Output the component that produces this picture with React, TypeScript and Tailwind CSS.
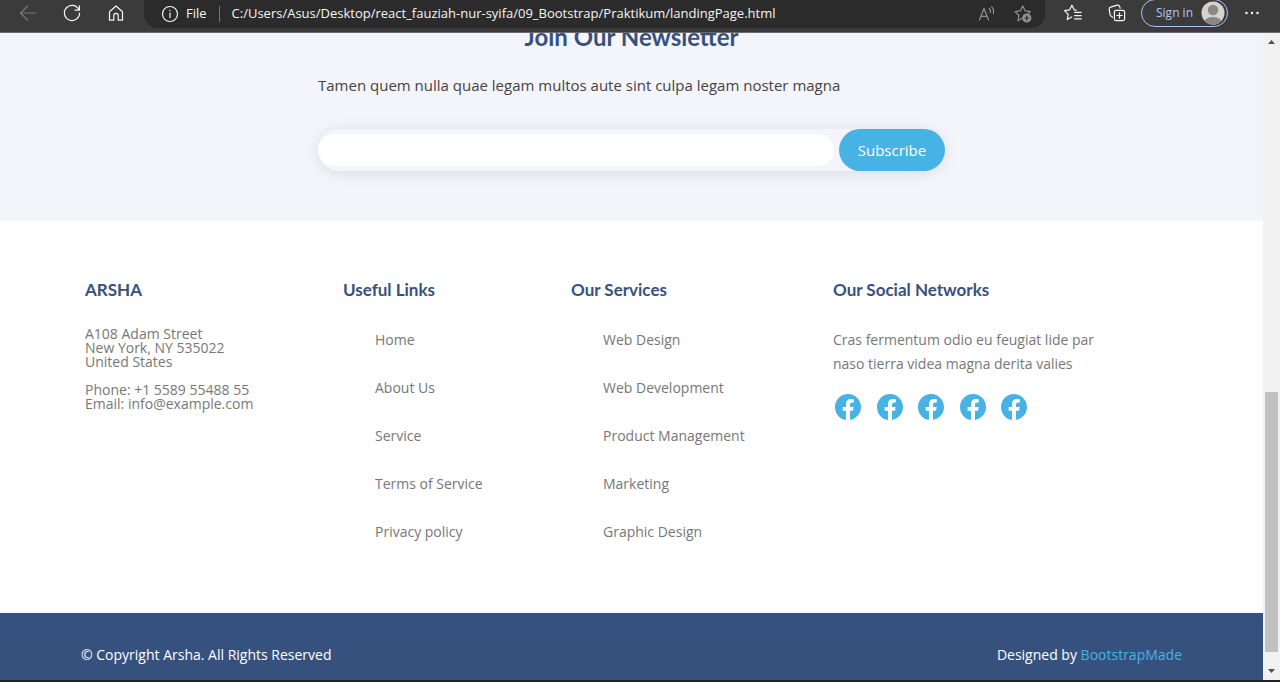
import type { ReactNode } from 'react';
import { BsFacebook } from 'react-icons/bs';

const usefulLinks = ['Home', 'About Us', 'Service', 'Terms of Service', 'Privacy policy'];
const services = ['Web Design', 'Web Development', 'Product Management', 'Marketing', 'Graphic Design'];
const socials = ['one', 'two', 'three', 'four', 'five'];

function ToolButton({ label, className = '', children }: { label: string; className?: string; children: ReactNode }) {
  return (
    <button type="button" aria-label={label} className={`flex size-5 shrink-0 items-center justify-center ${className}`}>
      <svg viewBox="0 0 20 20" className="size-5" fill="none" stroke="currentColor" strokeWidth="1.2" strokeLinecap="round" strokeLinejoin="round">
        {children}
      </svg>
    </button>
  );
}

function BrowserBar() {
  return (
    <header className="flex h-[33px] shrink-0 items-start border-b border-[#6b6b6b] bg-[#3b3b3b] px-[18px] font-['Open_Sans',sans-serif] text-[#f5f5f5]">
      <div className="flex h-[26px] shrink-0 items-center gap-6 pr-[18px]">
        <ToolButton label="Back" className="text-[#777777]">
          <path d="M18 10H2.5M9.5 3L2.5 10l7 7" />
        </ToolButton>
        <ToolButton label="Refresh">
          <path d="M16.8 6.5A7.6 7.6 0 1 0 17.6 10M17.4 2.8v4.4H13" />
        </ToolButton>
        <ToolButton label="Home">
          <path d="M3.5 8.8L10 3l6.5 5.8v8.4h-4.3v-4.6a2.2 2.2 0 0 0-4.4 0v4.6H3.5z" />
        </ToolButton>
      </div>
      <div className="flex h-7 min-w-0 flex-1 items-center rounded-b-[14px] bg-[#2b2b2b] pr-3 pb-px pl-4">
        <ToolButton label="Site information">
          <circle cx="10" cy="10" r="7.5" />
          <path d="M10 9v4.5M10 6.4v.4" />
        </ToolButton>
        <span className="ml-[6px] text-[13px]">File</span>
        <span className="mx-3 h-4 w-px shrink-0 bg-[#777777]" />
        <input
          aria-label="Address"
          readOnly
          value="C:/Users/Asus/Desktop/react_fauziah-nur-syifa/09_Bootstrap/Praktikum/landingPage.html"
          className="min-w-0 flex-1 bg-transparent text-[13px] outline-none"
        />
        <ToolButton label="Read aloud" className="text-[#929292]">
          <path d="M2.5 16L7 4.5 11.5 16M4 12.3h6M12.3 4.5a4 4 0 0 1 1 4M14.7 2.8a7 7 0 0 1 1.6 6.6" />
        </ToolButton>
        <ToolButton label="Add to favorites" className="ml-4 text-[#929292]">
          <path d="M9.5 14l-4.6 2.8 1-5.5L2 7.6l5.3-.8 2.4-4.8 2.4 4.8 5.2.8-1.8 1.8" />
          <circle cx="13.8" cy="14" r="4" fill="currentColor" />
          <path d="M13.8 12v4M11.8 14h4" stroke="#2b2b2b" />
        </ToolButton>
      </div>
      <div className="flex h-[26px] shrink-0 items-center pl-[18px]">
        <ToolButton label="Favorites">
          <path d="M8.7 14l-4.5 2.6 1-5.3L1.6 7.6l5-.8L8.9 2.2l2.3 4.6 2 .3M11.6 9.3h6.6M11.6 12.6h6.6M11.6 15.9h6.6" />
        </ToolButton>
        <ToolButton label="Collections" className="ml-6">
          <rect x="7.4" y="7.4" width="10.2" height="10.2" rx="1.5" />
          <path d="M12.5 9.8v5.4M9.8 12.5h5.4M5.5 14.2l-1.6-1.3a2 2 0 0 1-.8-1.2L2.2 6.4a2 2 0 0 1 1.4-2.3l6.6-1.9a2 2 0 0 1 2.4 1.3l.5 1.6" />
        </ToolButton>
        <button type="button" className="ml-[14px] flex h-7 items-center gap-2 rounded-full border border-[#a9c4f5] pr-[2px] pl-[14px] text-xs text-[#a9c8ff]">
          Sign in
          <svg viewBox="0 0 24 24" className="size-6" aria-hidden="true">
            <clipPath id="avatar"><circle cx="12" cy="12" r="11.5" /></clipPath>
            <g clipPath="url(#avatar)">
              <rect width="24" height="24" fill="#d5d3d0" />
              <circle cx="12" cy="9" r="5.2" fill="#8b8886" />
              <ellipse cx="12" cy="21" rx="8.5" ry="5" fill="#8b8886" />
            </g>
          </svg>
        </button>
        <ToolButton label="Settings and more" className="ml-[14px]">
          <path d="M4.5 10h.01M10 10h.01M15.5 10h.01" strokeWidth="2.4" />
        </ToolButton>
      </div>
    </header>
  );
}

function Newsletter() {
  return (
    <section className="overflow-hidden bg-[#f3f5fa] pb-[50px]">
      <div className="mx-auto max-w-[627px]">
        <h4 className="-mt-3 text-center font-[Lato,sans-serif] text-2xl leading-8 font-bold text-[#37517e]">Join Our Newsletter</h4>
        <p className="mt-5 text-[15px] leading-6 text-[#444444]">Tamen quem nulla quae legam multos aute sint culpa legam noster magna</p>
        <form className="mt-8 flex h-[42px] items-center gap-[5px] rounded-full shadow-[0_2px_15px_rgba(0,0,0,0.1)]" onSubmit={(e) => e.preventDefault()}>
          <input type="email" aria-label="Email address" className="h-8 min-w-0 flex-1 rounded-full bg-white px-4 outline-none" />
          <button type="submit" className="h-full w-[106px] rounded-full bg-[#47b2e4] text-[15px] text-white">Subscribe</button>
        </form>
      </div>
    </section>
  );
}

function ColumnTitle({ children }: { children: ReactNode }) {
  return <h3 className="font-[Lato,sans-serif] text-[17px] leading-5 font-bold text-[#37517e]">{children}</h3>;
}

function LinkColumn({ title, links }: { title: string; links: string[] }) {
  return (
    <nav aria-label={title}>
      <ColumnTitle>{title}</ColumnTitle>
      <ul className="mt-7 space-y-6 pl-8">
        {links.map((link) => (
          <li key={link} className="leading-6"><a href="#">{link}</a></li>
        ))}
      </ul>
    </nav>
  );
}

function Footer() {
  return (
    <footer className="flex flex-1 flex-col text-sm">
      <div className="grid grid-cols-[258fr_228fr_262fr_345fr] bg-white px-[85px] pt-[59px] pb-[69px] text-[#777777]">
        <div>
          <ColumnTitle>ARSHA</ColumnTitle>
          <address className="mt-[27px] leading-[14px] not-italic">
            A108 Adam Street<br />
            New York, NY 535022<br />
            United States<br />
            <br />
            Phone: +1 5589 55488 55<br />
            Email: info@example.com
          </address>
        </div>
        <LinkColumn title="Useful Links" links={usefulLinks} />
        <LinkColumn title="Our Services" links={services} />
        <div>
          <ColumnTitle>Our Social Networks</ColumnTitle>
          <p className="mt-7 max-w-[280px] leading-6">Cras fermentum odio eu feugiat lide par naso tierra videa magna derita valies</p>
          <div className="mt-[18px] ml-[2px] flex w-48 justify-between text-[#47b2e4]">
            {socials.map((name) => (
              <a key={name} href="#" aria-label={`Facebook ${name}`}><BsFacebook className="size-[26px]" /></a>
            ))}
          </div>
        </div>
      </div>
      <div className="flex flex-1 items-start justify-between bg-[#37517e] px-[81px] pt-[30px] pb-[13px] leading-6 text-white">
        <p>© Copyright Arsha. All Rights Reserved</p>
        <p>Designed by <a href="#" className="text-[#47b2e4]">BootstrapMade</a></p>
      </div>
    </footer>
  );
}

function ScrollBar() {
  return (
    <div aria-hidden="true" className="flex w-[17px] shrink-0 flex-col items-center bg-[#f1f1f1] py-[7px]">
      <svg viewBox="0 0 7 4" className="h-1 w-[7px]"><path d="M0 4L3.5 0 7 4z" fill="#505050" /></svg>
      <div className="flex-[347]" />
      <div className="w-[13px] flex-[259] bg-[#c1c1c1]" />
      <div className="flex-[17]" />
      <svg viewBox="0 0 7 4" className="h-1 w-[7px]"><path d="M0 0h7L3.5 4z" fill="#505050" /></svg>
    </div>
  );
}

export default function App() {
  return (
    <div className="flex min-h-screen flex-col border-b-2 border-[#222222] bg-white font-['Open_Sans',sans-serif]">
      <BrowserBar />
      <div className="flex flex-1">
        <main className="flex min-w-0 flex-1 flex-col">
          <Newsletter />
          <Footer />
        </main>
        <ScrollBar />
      </div>
    </div>
  );
}
